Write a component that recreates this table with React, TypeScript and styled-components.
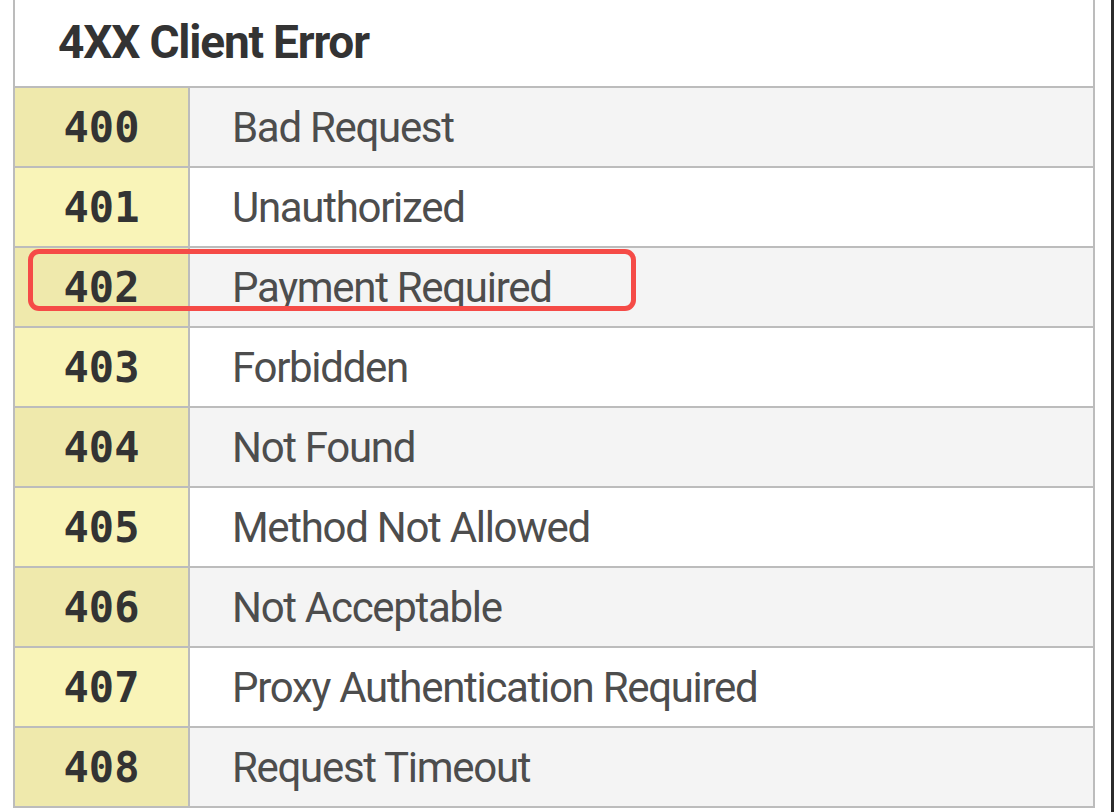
import React from "react";
import styled, { createGlobalStyle } from "styled-components";

const GlobalStyle = createGlobalStyle`
  html, body { margin: 0; padding: 0; background: #ffffff; }
  body { font-family: Roboto, "Liberation Sans", sans-serif; }
  * { box-sizing: border-box; }
`;

const Page = styled.div`
  width: 1114px;
  height: 812px;
  padding-left: 13px;
  padding-right: 16px;
  border-right: 3px solid #2b2b2b;
  background: #ffffff;
  overflow: hidden;
`;

const Table = styled.div`
  width: 1082px;
  border-left: 2px solid #bcbcbc;
  border-right: 2px solid #bcbcbc;
  border-bottom: 2px solid #bcbcbc;
  background: #ffffff;
`;

const Header = styled.div`
  height: 88px;
  display: flex;
  align-items: center;
  padding-left: 43px;
  padding-bottom: 2px;
  border-bottom: 2px solid #bcbcbc;
  font-family: Roboto, "Liberation Sans", sans-serif;
  font-weight: 700;
  font-size: 46px;
  letter-spacing: -1.2px;
  color: #333333;
`;

const Row = styled.div`
  position: relative;
  display: grid;
  grid-template-columns: 175px 1fr;
  height: 80px;
  border-bottom: 2px solid #bcbcbc;
  &:last-child { border-bottom: none; height: 78px; }
`;

const Code = styled.div<{ $alt: boolean }>`
  display: flex;
  align-items: center;
  justify-content: center;
  border-right: 2px solid #bcbcbc;
  background: ${(p) => (p.$alt ? "#efe9ac" : "#f9f4b8")};
  font-family: "DejaVu Sans Mono", "Liberation Mono", monospace;
  font-weight: 700;
  font-size: 42px;
  color: #333333;
`;

const Label = styled.div<{ $alt: boolean }>`
  display: flex;
  align-items: center;
  padding-left: 42px;
  background: ${(p) => (p.$alt ? "#f4f4f4" : "#ffffff")};
  font-family: Roboto, "Liberation Sans", sans-serif;
  font-weight: 400;
  font-size: 42px;
  letter-spacing: -1.3px;
  color: #4d4d4d;
`;

const Highlight = styled.div`
  position: absolute;
  left: 13px;
  top: 1px;
  width: 608px;
  height: 62px;
  border: 5px solid #f54b47;
  border-radius: 11px;
  pointer-events: none;
`;

const rows: [string, string][] = [
  ["400", "Bad Request"],
  ["401", "Unauthorized"],
  ["402", "Payment Required"],
  ["403", "Forbidden"],
  ["404", "Not Found"],
  ["405", "Method Not Allowed"],
  ["406", "Not Acceptable"],
  ["407", "Proxy Authentication Required"],
  ["408", "Request Timeout"],
];

export default function App() {
  return (
    <>
      <GlobalStyle />
      <Page>
        <Table>
          <Header>4XX Client Error</Header>
          {rows.map(([code, label], i) => (
            <Row key={code}>
              <Code $alt={i % 2 === 0}>{code}</Code>
              <Label $alt={i % 2 === 0}>{label}</Label>
              {code === "402" && <Highlight />}
            </Row>
          ))}
        </Table>
      </Page>
    </>
  );
}
